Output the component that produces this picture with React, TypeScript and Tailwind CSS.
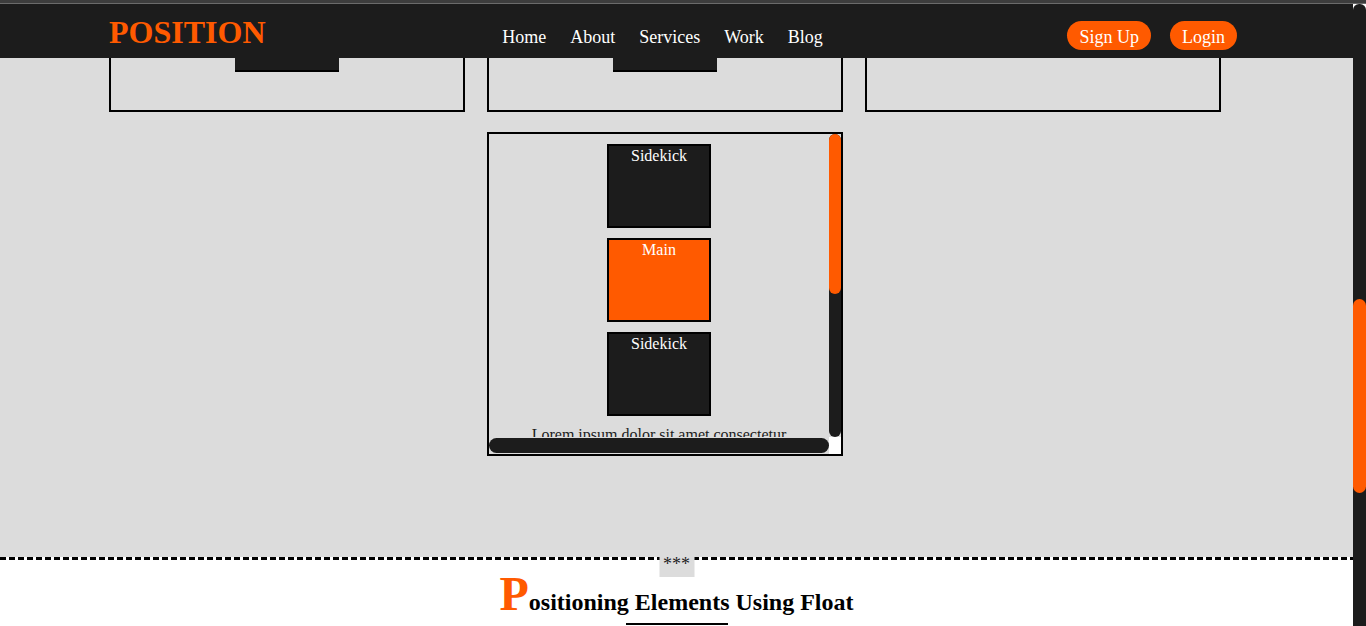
import React from "react";

// nav links shown in the header
const navLinks: string[] = ["Home", "About", "Services", "Work", "Blog"];

const serif = { fontFamily: '"Liberation Serif", "Times New Roman", serif' };

// one of the small boxes inside the scroll demo
const DemoBox: React.FC<{ label: string; main?: boolean }> = ({ label, main }) => {
  return (
    <div
      className={`shrink-0 w-[104px] h-[84px] border-2 border-black text-white text-[16px] leading-[18px] text-center pt-[1px] ${
        main ? "bg-[#ff5a00]" : "bg-[#1c1c1c]"
      }`}
    >
      {label}
    </div>
  );
};

const Header: React.FC = () => {
  return (
    <div className="shrink-0 h-[54px] bg-[#1c1c1c] flex items-start justify-between pl-[109px] pr-[116px]">
      <div className="text-[32px] leading-[37px] font-bold text-[#ff5a00] mt-[10px]">POSITION</div>
      <ul className="flex gap-[24px] mt-[23px] text-white text-[18px] leading-[21px] ml-[-8px]">
        {navLinks.map((link, i) => (
          <li key={i}>{link}</li>
        ))}
      </ul>
      <div className="flex gap-[19px] mt-[17px]">
        <button className="h-[29px] px-3 pt-[4px] rounded-full bg-[#ff5a00] text-white text-[18px] leading-[21px]">
          Sign Up
        </button>
        <button className="h-[29px] px-3 pt-[4px] rounded-full bg-[#ff5a00] text-white text-[18px] leading-[21px]">
          Login
        </button>
      </div>
    </div>
  );
};

// the scrollable demo container with its custom scrollbars
const ScrollDemo: React.FC = () => {
  return (
    <div className="w-[356px] h-[324px] border-2 border-black flex flex-col bg-[#dcdcdc]">
      <div className="flex h-[303px] shrink-0">
        <div className="flex-1 overflow-hidden flex flex-col items-center pt-[10px] gap-[10px]">
          <DemoBox label="Sidekick" />
          <DemoBox label="Main" main />
          <DemoBox label="Sidekick" />
          <p className="shrink-0 text-[16px] leading-[18px] text-[#1c1c1c] whitespace-nowrap">
            Lorem ipsum dolor sit amet consectetur
          </p>
        </div>
        <div className="w-[12px] bg-[#1c1c1c] rounded-full flex flex-col">
          <div className="h-[160px] bg-[#ff5a00] rounded-full"></div>
        </div>
      </div>
      <div className="flex flex-1">
        <div className="flex-1 bg-[#1c1c1c] rounded-full my-[1px]"></div>
        <div className="w-[12px] bg-white"></div>
      </div>
    </div>
  );
};

const App: React.FC = () => {
  return (
    <div className="w-[1366px] h-[626px] overflow-hidden bg-white flex flex-col" style={serif}>
      <div className="shrink-0 h-[3px] bg-[#3d3d3d]"></div>
      <div className="shrink-0 h-[1px] bg-[#6b6b6b]"></div>
      <div className="flex flex-1 min-h-0">
        <div className="flex-1 flex flex-col">
          <Header />

          {/* gray section, scrolled so the card tops sit under the header */}
          <div className="shrink-0 h-[499px] bg-[#dcdcdc] pl-[109px]">
            <div className="grid grid-cols-[356px_356px_356px] gap-x-[22px] gap-y-[20px]">
              <div className="h-[54px] border-2 border-t-0 border-black flex justify-center">
                <div className="w-[104px] h-[14px] bg-[#1c1c1c] border-b-2 border-black"></div>
              </div>
              <div className="h-[54px] border-2 border-t-0 border-black flex justify-center">
                <div className="w-[104px] h-[14px] bg-[#1c1c1c] border-b-2 border-black"></div>
              </div>
              <div className="h-[54px] border-2 border-t-0 border-black"></div>
              <div className="col-start-2">
                <ScrollDemo />
              </div>
            </div>
          </div>

          {/* dashed divider */}
          <div className="shrink-0 relative h-[3px] bg-[repeating-linear-gradient(90deg,#000_0_6px,transparent_6px_9px)]">
            <span className="absolute left-1/2 -translate-x-1/2 top-[-4px] px-[4px] h-[24px] bg-[#dcdcdc] text-[#222] text-[18px] leading-[22px]">
              ***
            </span>
          </div>

          <h1 className="shrink-0 h-[55px] mt-[6px] text-center font-bold text-[24px] leading-[55px] text-black">
            <span className="text-[48px] leading-[55px] text-[#ff5a00]">P</span>ositioning Elements Using Float
          </h1>
          <div className="shrink-0 mx-auto mt-[2px] w-[102px] h-[2px] bg-black"></div>
        </div>

        {/* page scrollbar */}
        <div className="w-[13px] bg-[#1c1c1c] rounded-t-[6px] flex flex-col">
          <div className="h-[194px] mt-[295px] bg-[#ff5a00] rounded-full"></div>
        </div>
      </div>
    </div>
  );
};

export default App;
